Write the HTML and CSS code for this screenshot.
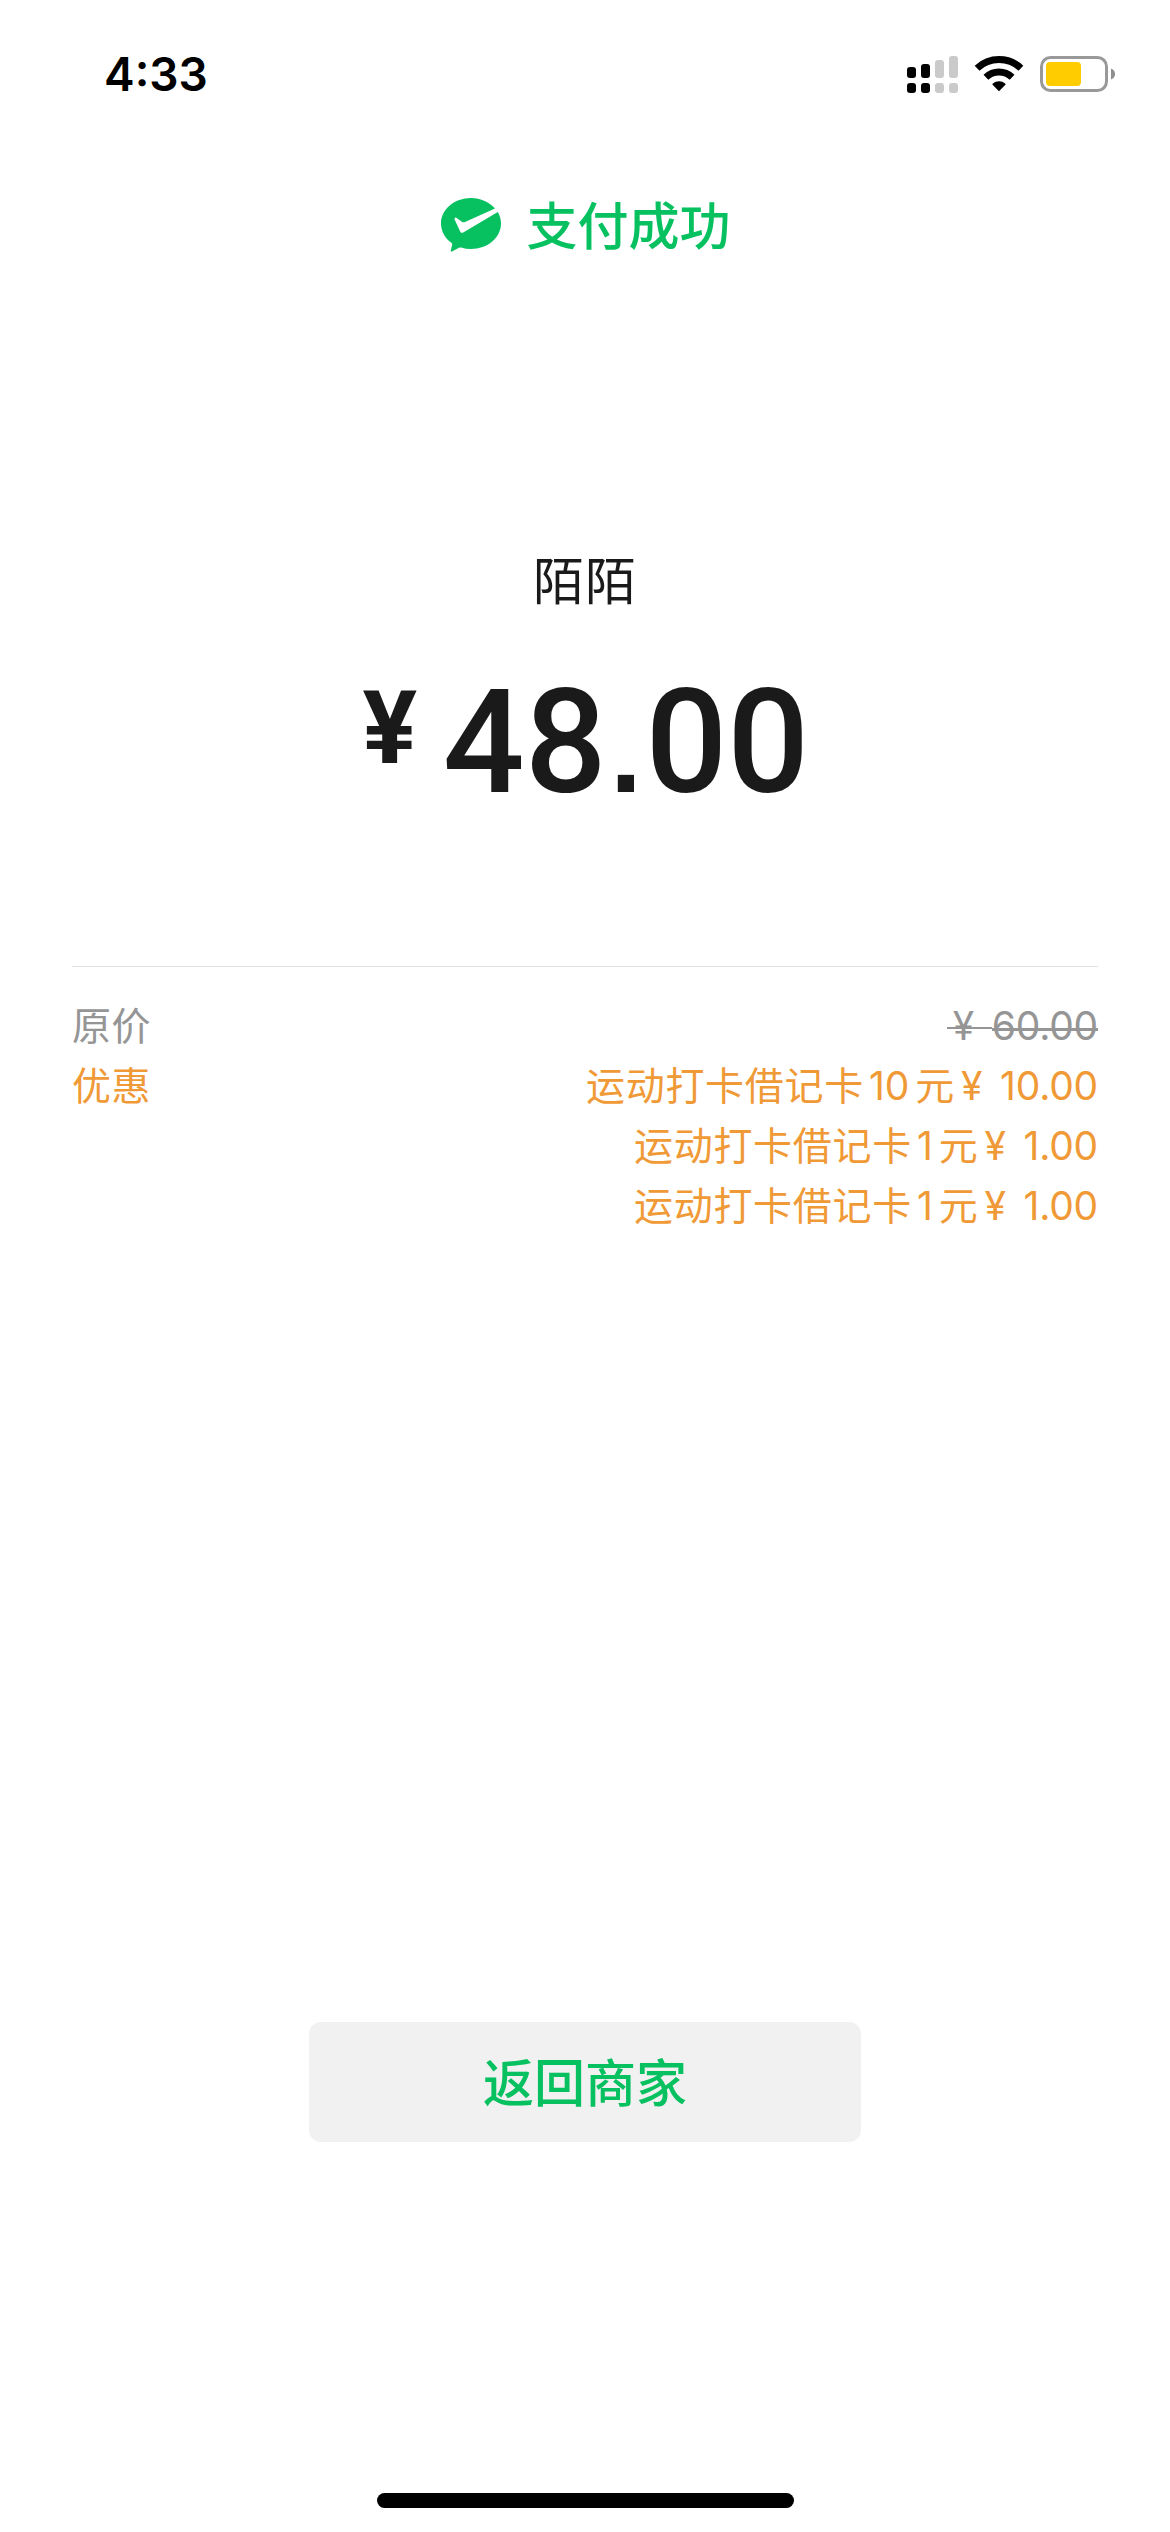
FILE: index.html
```html
<!DOCTYPE html>
<html lang="zh-CN">
<head>
<meta charset="utf-8">
<title>支付成功</title>
<link rel="stylesheet" href="styles.css">
</head>
<body>
<div class="screen">
  <header class="status-bar">
    <span class="clock">4:33</span>
    <svg class="status-icons" width="210" height="40" viewBox="0 0 210 40">
      <g fill="#000">
        <rect x="0" y="12" width="9" height="11" rx="3"/>
        <rect x="14" y="9" width="9" height="14" rx="3"/>
        <rect x="0" y="28" width="9" height="10" rx="3"/>
        <rect x="14" y="28" width="9" height="10" rx="3"/>
      </g>
      <g fill="#cacaca">
        <rect x="28" y="5" width="9" height="18" rx="3"/>
        <rect x="42" y="1" width="9" height="22" rx="3"/>
        <rect x="28" y="28" width="9" height="10" rx="3"/>
        <rect x="42" y="28" width="9" height="10" rx="3"/>
      </g>
      <g fill="none" stroke="#000" stroke-width="7">
        <path d="M70.1 13.2a32 32 0 0 1 43.8 0"/>
        <path d="M78.9 22.2a19.2 19.2 0 0 1 26.2 0"/>
      </g>
      <path d="M92 36.2l-6.4-6.4q-.6-.8.2-1.4a9.8 9.8 0 0 1 12.4 0q.8.6.2 1.4z"/>
      <rect x="134.500" y="2.500" width="65" height="33" rx="9" fill="#fff" stroke="#999" stroke-width="3"/>
      <rect x="139" y="7" width="35" height="24" rx="4" fill="#ffcc00"/>
      <path d="M204 13.500q4 1.500 4 5.500t-4 5.500z" fill="#8e8e8e"/>
    </svg>
  </header>

  <div class="result">
    <svg class="result-icon" width="61" height="55" viewBox="0 0 61 55">
      <path d="M30 0C13.400 0 0 11.400 0 25.500c0 7.700 4 14.600 10.400 19.300q1 .7.800 1.800L9.800 52.500q-.2 1.700 1.300 1.100l6.800-3.900q1-.5 2.200-.2 4.800 1.500 9.900 1.500c16.600 0 30-11.400 30-25.500 0-4.300-1.100-8-3.200-11.500L22.200 34.500q-1.600.8-2.800-.6l-5.900-12.700q-.3-2 1.500-1.800l6.200 4.500q1.200.8 2.800.2L54 10.500C48.600 4.200 39.900 0 30 0z" fill="#07c160"/>
    </svg>
    <h1 class="result-title">支付成功</h1>
  </div>

  <div class="merchant">陌陌</div>
  <div class="total"><span class="total-sign">¥</span><span class="total-value">48<span class="point">.</span>00</span></div>

  <dl class="details">
    <div class="row original">
      <dt>原价</dt>
      <dd><div class="line"><span class="yen">¥</span><span class="num">60.00</span></div></dd>
    </div>
    <div class="row discount">
      <dt>优惠</dt>
      <dd>
        <div class="line"><span>运动打卡借记卡</span><span class="count">10</span><span>元</span><span class="yen">¥</span><span class="num">10.00</span></div>
        <div class="line"><span>运动打卡借记卡</span><span class="count">1</span><span>元</span><span class="yen">¥</span><span class="num">1.00</span></div>
        <div class="line"><span>运动打卡借记卡</span><span class="count">1</span><span>元</span><span class="yen">¥</span><span class="num">1.00</span></div>
      </dd>
    </div>
  </dl>

  <button class="back" type="button">返回商家</button>
  <div class="home-indicator"></div>
</div>
</body>
</html>
```
FILE: styles.css
```css
* { box-sizing: border-box; margin: 0; padding: 0; }

body {
  background: #fff;
  font-family: Inter, "Noto Sans CJK SC", sans-serif;
}

.screen {
  width: 1170px;
  height: 2532px;
  display: flex;
  flex-direction: column;
  align-items: center;
  background: #fff;
  overflow: hidden;
}

.status-bar {
  width: 100%;
  height: 150px;
  padding: 55px 53px 0 104px;
  display: flex;
  justify-content: space-between;
  align-items: flex-start;
}

.clock {
  font-size: 46px;
  font-weight: 600;
  line-height: 39px;
  color: #000;
}

.status-icons { display: block; }

.result {
  margin-top: 39px;
  margin-left: 2px;
  height: 72px;
  display: flex;
  align-items: center;
  gap: 24px;
}

.result-title {
  padding-top: 4px;
  font-size: 51px;
  font-weight: 500;
  line-height: 72px;
  color: #07c160;
}

.merchant {
  margin-top: 285px;
  font-size: 51px;
  line-height: 72px;
  letter-spacing: 1px;
  color: #1a1a1a;
}

.total {
  margin-top: 44px;
  margin-left: 2px;
  height: 160px;
  display: flex;
  align-items: flex-start;
  font-family: Roboto, sans-serif;
  color: #1a1a1a;
}

.total-sign {
  width: 54px;
  margin-top: 16px;
  display: flex;
  justify-content: center;
  font-size: 102px;
  font-weight: 700;
  line-height: 100px;
}

.total-value {
  margin-left: 26px;
  font-size: 144px;
  font-weight: 500;
  line-height: 161px;
}

.point {
  display: inline-block;
  width: 39px;
  text-align: center;
  font: 700 115px/100px "Liberation Sans", sans-serif;
}

.details {
  width: 1026px;
  margin-top: 144px;
  padding-top: 29px;
  border-top: 1px solid #e3e3e3;
  font-size: 39px;
  line-height: 60px;
}

.row {
  display: flex;
  justify-content: space-between;
}

.row dt { letter-spacing: 0.6px; }

.original { color: #959595; }
.discount { color: #f09a37; }

.line {
  height: 60px;
  display: flex;
  justify-content: flex-end;
  letter-spacing: 0.7px;
}

.count { padding: 0 6px 0 5px; letter-spacing: 0; }

.yen {
  width: 45px;
  padding-left: 6px;
  letter-spacing: 0;
}

.num { letter-spacing: -0.2px; }

.original .yen { background: linear-gradient(#959595, #959595) no-repeat 0 31px / 100% 2px; }
.original .num { background: linear-gradient(#959595, #959595) no-repeat 0 32px / 100% 3px; }

.back {
  width: 552px;
  height: 120px;
  margin-top: 786px;
  padding-top: 3px;
  border: 0;
  border-radius: 12px;
  background: #f1f1f1;
  color: #07c160;
  font: 500 51px/72px Inter, "Noto Sans CJK SC", sans-serif;
}

.home-indicator {
  width: 417px;
  height: 15px;
  margin-top: 351px;
  border-radius: 8px;
  background: #000;
}
```
